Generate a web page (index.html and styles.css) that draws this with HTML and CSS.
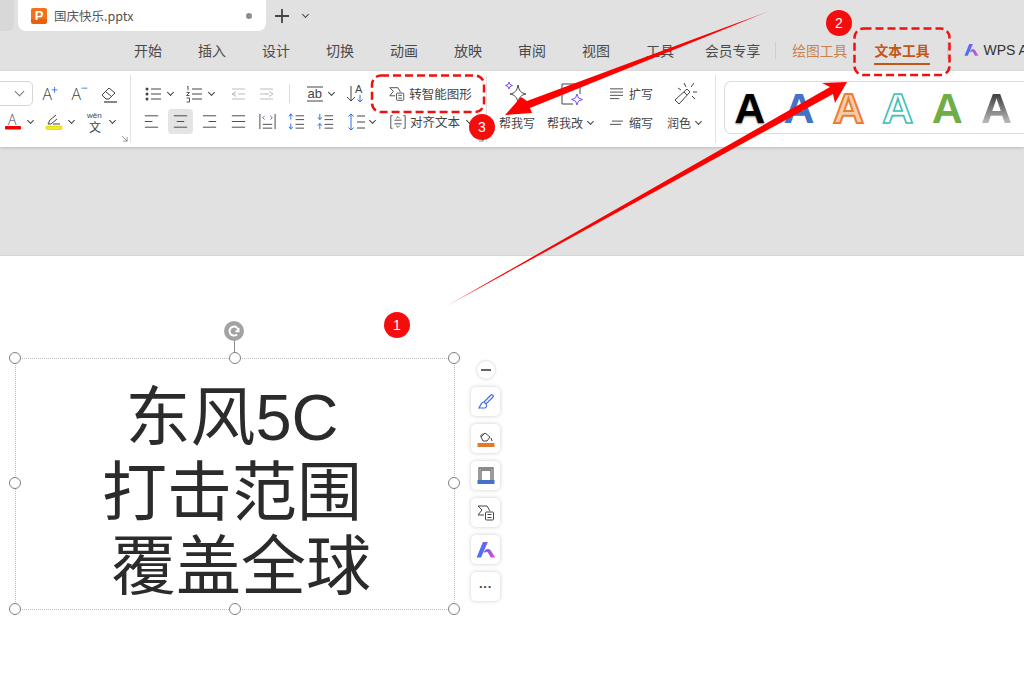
FILE: index.html
```html
<!DOCTYPE html>
<html lang="zh-CN">
<head>
  <meta charset="UTF-8" />
  <title>国庆快乐.pptx</title>
  <link rel="stylesheet" href="styles.css">
</head>
<body>
  <!-- title bar -->
  <div class="tabbar">
    <div class="tab-stub"></div>
    <div class="doc-tab">
      <span class="ppt-badge">P</span>
      <span class="doc-name">国庆快乐.pptx</span>
      <span class="doc-dot"></span>
    </div>
    <svg class="plus" viewBox="0 0 16 16"><path d="M8 1v14M1 8h14" /></svg>
    <span class="caret tab-caret"></span>
  </div>

  <!-- menu tabs -->
  <div class="menubar">
    <span class="menu-item">开始</span>
    <span class="menu-item">插入</span>
    <span class="menu-item">设计</span>
    <span class="menu-item">切换</span>
    <span class="menu-item">动画</span>
    <span class="menu-item">放映</span>
    <span class="menu-item">审阅</span>
    <span class="menu-item">视图</span>
    <span class="menu-item">工具</span>
    <span class="menu-item member">会员专享</span>
    <span class="menu-sep"></span>
    <span class="menu-item draw-tools">绘图工具</span>
    <span class="menu-item text-tools">文本工具</span>
    <span class="menu-sep sep-ai"></span>
    <svg class="wps-logo" viewBox="0 0 16 14">
      <defs>
        <linearGradient id="wpsGrad" x1="0" x2="1" y1="0" y2="0">
          <stop offset="0" stop-color="#2f7bff" />
          <stop offset="0.55" stop-color="#7a5cf5" />
          <stop offset="1" stop-color="#ff4fa0" />
        </linearGradient>
      </defs>
      <path fill="url(#wpsGrad)" d="M5.5 0.5h4L4 13H0.5zM7 7.5c2-1.800 4-1.500 5 0l3.500 5.500h-3.700L9.500 9c-.7-1-1.500-.8-2.300.3l-.9-.9z" />
    </svg>
    <span class="wps-label">WPS AI</span>
  </div>

  <!-- ribbon -->
  <div class="ribbon">
    <div class="group font-group">
      <div class="row">
        <div class="font-select"><span class="chevron"></span></div>
        <span class="tool ml5">
          <svg viewBox="0 0 24 20"><text x="3" y="17" class="glyph">A</text><path class="blue" d="M14 5h7M17.500 1.500v7" /></svg>
        </span>
        <span class="tool ml5">
          <svg viewBox="0 0 24 20"><text x="3" y="17" class="glyph">A</text><path class="blue" d="M15 3h7" /></svg>
        </span>
        <span class="tool ml6">
          <svg viewBox="0 0 20 20"><path d="M3 11l7-7 6 5-6 6H7z" /><path d="M6.500 7.500l6 5" /><path class="grey-thick" d="M5 18h13" /></svg>
        </span>
      </div>
      <div class="row font-row2">
        <span class="tool tool-color">
          <svg viewBox="0 0 18 20"><text x="4" y="13" class="glyph small">A</text><rect x="1" y="14" width="16" height="3.500" rx="1" fill="#f00000" stroke="none" /></svg>
          <span class="caret"></span>
        </span>
        <span class="tool tool-color ml10">
          <svg viewBox="0 0 18 20"><path d="M3 12l2-4 6-5M3 12l3 0 6-5M8 12h7" /><rect x="1" y="14" width="16" height="3.500" rx="1" fill="#f8e71c" stroke="#d8c000" stroke-width=".5" /></svg>
          <span class="caret"></span>
        </span>
        <span class="tool tool-color ml10">
          <svg class="wen-icon" viewBox="0 0 18 22"><text x="1" y="7" class="pinyin">wěn</text><text x="3" y="21" class="wen">文</text></svg>
          <span class="caret"></span>
        </span>
      </div>
      <svg class="launcher" viewBox="0 0 8 8"><path d="M1 1l6 6M7 2.500V7H2.500" /></svg>
    </div>

    <div class="group para-group">
      <div class="row para-top">
        <span class="tool tool-caret">
          <svg viewBox="0 0 20 20"><circle cx="3" cy="5" r="1.500" class="dot" /><circle cx="3" cy="10" r="1.500" class="dot" /><circle cx="3" cy="15" r="1.500" class="dot" /><path d="M7 5h10M7 10h10M7 15h10" /></svg>
          <span class="caret"></span>
        </span>
        <span class="tool tool-caret ml7">
          <svg viewBox="0 0 20 20"><path class="thick" d="M2 3l1-.8v4M1.500 8.500h3l-3 3h3M1.500 14h3v4h-3" /><path d="M7 5h10M7 10h10M7 15h10" /></svg>
          <span class="caret"></span>
        </span>
        <span class="tool off ml4">
          <svg viewBox="0 0 20 20"><path d="M4 5h13M10 10h7M4 15h13M8 7.500L4 10l4 2.500M4 10h4" /></svg>
        </span>
        <span class="tool off">
          <svg viewBox="0 0 20 20"><path d="M3 5h13M3 10h7M3 15h13M12 7.500l4 2.500-4 2.500M12 10h-4" /></svg>
        </span>
        <span class="para-sep"></span>
        <span class="tool tool-caret ml15">
          <svg viewBox="0 0 20 20"><path d="M2 3h16M2 17h16" /><text x="2.500" y="14" class="ab">ab</text></svg>
          <span class="caret"></span>
        </span>
        <span class="tool tool-sort ml2">
          <svg viewBox="0 0 20 20"><path d="M6 2v15M2 13l4 4 4-4" /><text x="10" y="9" class="ab small-a">A</text><path class="blue" d="M15 11v7M12.500 15.500l2.500 2.500 2.500-2.500" /></svg>
        </span>
        <span class="tool tool-text smart ml19">
          <svg viewBox="0 0 20 20"><path d="M2 3h9l3 5M2 3l4 4-4 5h6" /><rect x="9.500" y="9" width="8" height="8" rx="1" fill="#fff" /><path d="M11.500 11.500h4M11.500 14.500h4" /></svg>
          <span class="tool-label">转智能图形</span>
        </span>
      </div>
      <div class="row para-bottom">
        <span class="tool align"><svg viewBox="0 0 20 20"><path d="M3 4h14M3 10h8M3 16h14" /></svg></span>
        <span class="tool align active"><svg viewBox="0 0 20 20"><path d="M3 4h14M6 10h8M3 16h14" /></svg></span>
        <span class="tool align"><svg viewBox="0 0 20 20"><path d="M3 4h14M9 10h8M3 16h14" /></svg></span>
        <span class="tool align"><svg viewBox="0 0 20 20"><path d="M3 4h14M3 10h14M3 16h14" /></svg></span>
        <span class="tool align"><svg viewBox="0 0 20 20"><path d="M2 2v16M18 2v16M5 13h10M5 17h10" /><path class="blue" d="M7 4L5 6l2 2M13 4l2 2-2 2" /></svg></span>
        <span class="tool align"><svg viewBox="0 0 20 20"><path class="blue" d="M4 2v6M2 4.500L4 2l2 2.500M4 12v6M2 15.500L4 18l2-2.500" /><path d="M9 4h9M9 8h9M9 13h9M9 17h9" /></svg></span>
        <span class="tool align"><svg viewBox="0 0 20 20"><path class="blue" d="M4 2v6M2 5.500L4 8l2-2.500M4 12v6M2 14.500L4 12l2 2.500" /><path d="M9 4h9M9 8h9M9 13h9M9 17h9" /></svg></span>
        <span class="tool tool-space">
          <svg viewBox="0 0 20 20"><path class="blue" d="M5 2v16M2.500 4.500L5 2l2.500 2.500M2.500 15.500L5 18l2.500-2.500" /><path d="M11 4h8M11 10h8M11 16h8" /></svg>
          <span class="caret"></span>
        </span>
        <span class="tool tool-text align-text ml7">
          <svg viewBox="0 0 20 20"><path d="M4 3H2v14h2M16 3h2v14h-2M6 8h8M6 12h8M8 6l2-2 2 2M8 14l2 2 2-2" /></svg>
          <span class="tool-label">对齐文本</span>
          <span class="caret"></span>
        </span>
      </div>
      <svg class="launcher" viewBox="0 0 8 8"><path d="M1 1l6 6M7 2.500V7H2.500" /></svg>
    </div>

    <div class="group ai-group">
      <div class="ai-col write-col">
        <svg class="ai-icon" viewBox="0 0 28 28"><path d="M15 5c1 6 3 8 8 9-5 1-7 3-8 9-1-6-3-8-8-9 5-1 7-3 8-9z" /><path class="violet" d="M6 2l1 2.500L9.500 5.500 7 6.500 6 9 5 6.500 2.500 5.500 5 4.500z" /></svg>
        <span class="ai-label">帮我写</span>
      </div>
      <div class="ai-col edit-col">
        <svg class="ai-icon" viewBox="0 0 28 28"><path d="M16 24H5V4h18v10" /><path class="violet" d="M20 14l1.500 4 4 1.500-4 1.500-1.500 4-1.500-4-4-1.500 4-1.500z" /></svg>
        <span class="ai-label">帮我改<span class="caret"></span></span>
      </div>
      <div class="ai-col expand-col">
        <span class="ai-line">
          <svg viewBox="0 0 16 14"><path d="M1 2h14M1 5.500h14M1 9h14M1 12.500h10" /></svg>扩写
        </span>
        <span class="ai-line">
          <svg viewBox="0 0 16 14"><path d="M3 5.500h12M1 9h12" /></svg>缩写
        </span>
      </div>
      <div class="ai-col polish-col">
        <svg class="ai-icon" viewBox="0 0 28 28"><path d="M4 20L16 9l3 3L8 24z" /><path d="M13 12l3 3M13 3l2 4M23 3l-3 4M26 12h-4M24 19l-3-3M7 8l3 2" /></svg>
        <span class="ai-label">润色<span class="caret"></span></span>
      </div>
    </div>

    <div class="gallery">
      <span class="art art-black">A</span>
      <span class="art art-blue">A</span>
      <span class="art art-orange">A</span>
      <span class="art art-teal">A</span>
      <span class="art art-green">A</span>
      <span class="art art-grey">A</span>
    </div>
  </div>

  <div class="workspace"></div>

  <!-- slide with the selected text box -->
  <div class="slide">
    <div class="rotate-line"></div>
    <svg class="rotate-handle" viewBox="0 0 20 20"><circle cx="10" cy="10" r="10" fill="#a3a3a3" /><path d="M14.500 10a4.500 4.500 0 1 0-1.500 3.400M14.500 7v3.200h-3" fill="none" stroke="#fff" stroke-width="2" /></svg>
    <div class="textbox">
      <div class="textbox-text">东风5C
打击范围
 覆盖全球</div>
      <span class="handle h-tl"></span>
      <span class="handle h-tc"></span>
      <span class="handle h-tr"></span>
      <span class="handle h-ml"></span>
      <span class="handle h-mr"></span>
      <span class="handle h-bl"></span>
      <span class="handle h-bc"></span>
      <span class="handle h-br"></span>
    </div>

    <div class="float-bar">
      <span class="float-minus"></span>
      <span class="float-btn">
        <svg viewBox="0 0 20 20"><path class="float-blue" d="M8 10l7-7c1-1 3 1 2 2l-7 7zM8 10c-3 0-3 3-5 6h6c2-1 2-3 1-4" /></svg>
      </span>
      <span class="float-btn">
        <svg viewBox="0 0 20 20"><path d="M5 8l4-4 5 4-3 4H7zM5 8c-1-2 1-3 3-3M15 9l1 3" /><rect x="1.500" y="14" width="17" height="4" fill="#e07b2a" stroke="none" /></svg>
      </span>
      <span class="float-btn">
        <svg viewBox="0 0 20 20"><path d="M3 14V2h14v12M5 14V4h10v10" stroke="#666" stroke-width="1.300" /><rect x="1.500" y="14" width="17" height="4" fill="#4472c4" stroke="none" /></svg>
      </span>
      <span class="float-btn">
        <svg viewBox="0 0 20 20"><path d="M2 3h9l3 5M2 3l4 4-4 5h6" /><rect x="9.500" y="9" width="8" height="8" rx="1" fill="#fff" /><path d="M11.500 11.500h4M11.500 14.500h4" /></svg>
      </span>
      <span class="float-btn">
        <svg class="float-logo" viewBox="0 0 16 14"><path fill="url(#wpsGrad)" stroke="none" d="M5.500 0.500h4L4 13H0.500zM7 7.500c2-1.800 4-1.500 5 0l3.500 5.500h-3.700L9.500 9c-.7-1-1.500-.8-2.300.3l-.9-.9z" /></svg>
      </span>
      <span class="float-btn float-more">···</span>
    </div>
  </div>

  <!-- red annotations drawn over the screenshot -->
  <svg class="annotations" viewBox="0 0 1024 674">
    <defs>
      <linearGradient id="tailA" gradientUnits="userSpaceOnUse" x1="443" y1="308" x2="480" y2="287">
        <stop offset="0" stop-color="#ff0000" stop-opacity="0.4" />
        <stop offset="1" stop-color="#ff0000" />
      </linearGradient>
      <linearGradient id="tailB" gradientUnits="userSpaceOnUse" x1="772" y1="10" x2="735" y2="25">
        <stop offset="0" stop-color="#ff0000" stop-opacity="0.4" />
        <stop offset="1" stop-color="#ff0000" />
      </linearGradient>
    </defs>
    <rect class="dash" x="372" y="75.500" width="112" height="36.500" rx="9" />
    <rect class="dash" x="854.500" y="28.500" width="95" height="46.500" rx="9" />
    <polygon fill="url(#tailA)" points="443,308 830,87 822,83 847,82 835,103 833,94" />
    <polygon fill="url(#tailB)" points="772,10 527,101 521,97 505,115 532,113 530,108" />
    <circle class="pin" cx="397" cy="325" r="13" />
    <circle class="pin" cx="839" cy="23" r="13" />
    <circle class="pin" cx="482" cy="127" r="13" />
    <text class="pin-num" x="397" y="330">1</text>
    <text class="pin-num" x="839" y="28">2</text>
    <text class="pin-num" x="482" y="132">3</text>
  </svg>
</body>
</html>
```

FILE: styles.css
```css
* {
  box-sizing: border-box;
}

html,
body {
  margin: 0;
  height: 100%;
}

body {
  width: 1024px;
  height: 674px;
  overflow: hidden;
  position: relative;
  background-color: #e1e1e1;
  color: #444;
  font-family: "Noto Sans CJK SC", "Liberation Sans", sans-serif;
  font-size: 12px;
  display: flex;
  flex-direction: column;
}

svg {
  display: block;
  fill: none;
  stroke: #444;
  stroke-width: 1;
}

/* Title bar */
.tabbar {
  height: 31px;
  display: flex;
  align-items: center;
  flex-shrink: 0;
}

.tab-stub {
  width: 14px;
  height: 31px;
  background-color: #d8d8d8;
  border-bottom-right-radius: 6px;
}

.doc-tab {
  width: 248px;
  height: 31px;
  margin-left: 4px;
  padding-left: 13px;
  background-color: #fff;
  border-bottom-left-radius: 8px;
  border-bottom-right-radius: 8px;
  display: flex;
  align-items: center;
}

.ppt-badge {
  width: 16px;
  height: 16px;
  border-radius: 2px;
  background: linear-gradient(#f4701a 70%, #e85f10 70%);
  color: #fff;
  font: bold 13px/16px "Liberation Sans", sans-serif;
  text-align: center;
}

.doc-name {
  margin-left: 7px;
  color: #555;
  font-size: 12.500px;
  line-height: 16px;
}

.doc-dot {
  width: 6px;
  height: 6px;
  margin-left: auto;
  margin-right: 14px;
  border-radius: 50%;
  background-color: #8c8c8c;
}

.plus {
  width: 16px;
  height: 16px;
  margin-left: 8px;
  stroke: #444;
  stroke-width: 1.800;
}

.caret {
  display: inline-block;
  width: 5px;
  height: 5px;
  border-right: 1.300px solid #444;
  border-bottom: 1.300px solid #444;
  transform: rotate(45deg);
  margin-top: -3px;
  flex-shrink: 0;
}

.tab-caret {
  margin-left: 13px;
}

/* Menu tabs */
.menubar {
  height: 40px;
  padding: 0 0 2px 134px;
  flex-shrink: 0;
  display: flex;
  align-items: center;
  white-space: nowrap;
  overflow: hidden;
}

.menu-item {
  margin-right: 36px;
  font-size: 14px;
  line-height: 20px;
  color: #4a4a4a;
}

.menu-item.member {
  margin-left: -5px;
  margin-right: 15px;
  font-size: 13.800px;
}

.menu-sep {
  width: 1px;
  height: 17px;
  background-color: #cfcfcf;
  margin-right: 16px;
  flex-shrink: 0;
}

.menu-item.draw-tools {
  margin-right: 27px;
  color: #c9824e;
  font-size: 13.800px;
}

.menu-item.text-tools {
  margin-right: 17px;
  color: #c4561a;
  font-weight: 700;
  font-size: 13.800px;
  border-bottom: 2px solid #c4561a;
  height: 25px;
  margin-top: 5px;
}

.sep-ai {
  margin-right: 16px;
}

.wps-logo {
  width: 15px;
  height: 14px;
  stroke: none;
  flex-shrink: 0;
}

.wps-label {
  margin-left: 5px;
  font: 14px "Liberation Sans", sans-serif;
  color: #333;
}

/* Ribbon */
.ribbon {
  height: 76px;
  flex-shrink: 0;
  background-color: #fff;
  box-shadow: 0 1px 3px rgba(0, 0, 0, 0.18);
  display: flex;
  position: relative;
  z-index: 1;
}

.group {
  position: relative;
  height: 68px;
  margin-top: 4px;
  padding-top: 4px;
  border-right: 1px solid #e2e2e2;
  flex-shrink: 0;
}

.row {
  height: 29px;
  display: flex;
  align-items: center;
  white-space: nowrap;
}

.row + .row {
  margin-top: -1px;
}

.font-group {
  width: 131px;
}

.font-select {
  width: 43px;
  height: 25px;
  margin-left: -10px;
  border: 1px solid #d6d6d6;
  border-radius: 5px;
  display: flex;
  align-items: center;
  justify-content: flex-end;
  padding-right: 9px;
}

.chevron {
  width: 7px;
  height: 7px;
  border-right: 1px solid #777;
  border-bottom: 1px solid #777;
  transform: rotate(45deg);
  margin-top: -4px;
}

.tool {
  width: 24px;
  height: 24px;
  display: flex;
  align-items: center;
  justify-content: center;
  flex-shrink: 0;
  border-radius: 4px;
}

.tool svg {
  width: 20px;
  height: 20px;
  flex-shrink: 0;
}

.ml2 { margin-left: 2px; }
.ml4 { margin-left: 4px; }
.ml5 { margin-left: 5px; }
.ml6 { margin-left: 6px; }
.ml7 { margin-left: 7px; }
.ml10 { margin-left: 10px; }
.ml15 { margin-left: 15px; }
.ml19 { margin-left: 19px; }

.font-row2 {
  padding-left: 4px;
}

.tool-color {
  width: 31px;
  justify-content: flex-start;
  gap: 6px;
}

.tool-color svg {
  width: 18px;
  overflow: visible;
}

.tool-color svg.wen-icon {
  height: 22px;
}

.glyph {
  font: 300 19px "Open Sans", sans-serif;
  fill: #444;
  stroke: none;
}

.glyph.small {
  font-size: 14px;
}

.pinyin {
  font: 8px "Liberation Sans", sans-serif;
  fill: #444;
  stroke: none;
}

.wen {
  font: 12px "Noto Sans CJK SC", sans-serif;
  fill: #444;
  stroke: none;
}

.ab {
  font: 13px "Liberation Sans", sans-serif;
  fill: #444;
  stroke: none;
}

.small-a {
  font-size: 11px;
}

.blue {
  stroke: #2f6fdf;
}

.violet {
  stroke: #7a4df0;
}

.thick {
  stroke-width: 0.900;
}

.grey-thick {
  stroke: #888;
  stroke-width: 2;
}

.dot {
  fill: #444;
  stroke: none;
}

.off {
  width: 29px;
}

.off svg {
  stroke: #bdbdbd;
}

.launcher {
  position: absolute;
  right: 2px;
  bottom: 1px;
  width: 7px;
  height: 7px;
  stroke: #888;
}

.para-group {
  width: 356px;
}

.para-top {
  padding-left: 13px;
}

.tool-caret {
  width: 34px;
  justify-content: flex-start;
  padding-left: 0;
  gap: 4px;
}

.para-sep {
  width: 1px;
  height: 19px;
  margin-left: 8px;
  background-color: #dcdcdc;
}

.tool-sort {
  width: 28px;
}

.tool-text {
  width: auto;
  gap: 3px;
}

.tool-text svg {
  width: 18px;
  height: 18px;
}

.smart {
  width: 84px;
}

.tool-label {
  white-space: nowrap;
  font-size: 12.500px;
}

.para-bottom {
  padding-left: 6px;
}

.align {
  width: 29px;
  height: 25px;
}

.align svg {
  width: 19px;
  height: 19px;
}

.align.active {
  background-color: #e4e4e4;
  width: 25px;
  margin: 0 2px;
}

.tool-space {
  width: 36px;
  justify-content: flex-start;
  gap: 4px;
  margin-left: 6px;
}

.align-text {
  gap: 3px;
}

.align-text .caret {
  margin-left: 4px;
}

.ai-group {
  width: 229px;
  display: flex;
  padding-left: 12px;
}

.ai-col {
  display: flex;
  flex-direction: column;
  align-items: center;
  flex-shrink: 0;
}

.ai-icon {
  width: 28px;
  height: 28px;
  margin-top: 1px;
}

.ai-label {
  height: 29px;
  display: flex;
  align-items: center;
  gap: 5px;
  white-space: nowrap;
  color: #444;
}

.write-col {
  width: 36px;
}

.edit-col {
  width: 50px;
  margin-left: 12px;
  align-items: flex-start;
}

.edit-col .ai-icon {
  margin-left: 10px;
}

.expand-col {
  width: 44px;
  margin-left: 12px;
}

.polish-col {
  width: 36px;
  margin-left: 14px;
  align-items: flex-start;
}

.polish-col .ai-icon {
  margin-left: 4px;
}

.ai-line {
  height: 29px;
  display: flex;
  align-items: center;
  gap: 5px;
  white-space: nowrap;
}

.ai-line svg {
  width: 15px;
  height: 13px;
}

.gallery {
  width: 300px;
  height: 53px;
  margin: 10px 0 0 8px;
  border: 1px solid #dcdcdc;
  border-right: none;
  border-radius: 7px 0 0 7px;
  display: flex;
  align-items: center;
  overflow: hidden;
  flex-shrink: 0;
}

.art {
  width: 49.400px;
  flex-shrink: 0;
  text-align: center;
  font: bold 43px/50px "Liberation Sans", sans-serif;
}

.art-black {
  color: #000;
  text-shadow: 0 1px 2px rgba(0, 0, 0, 0.5);
}

.art-blue {
  color: #4472c4;
}

.art-orange {
  color: #f8cbad;
  -webkit-text-stroke: 2px #ed7d31;
}

.art-teal {
  color: #fff;
  -webkit-text-stroke: 1.600px #3cbfb5;
}

.art-green {
  color: #70ad47;
}

.art-grey {
  color: transparent;
  background: linear-gradient(#444 25%, #c4c4c4 85%);
  -webkit-background-clip: text;
  background-clip: text;
}

.workspace {
  height: 109px;
  flex-shrink: 0;
  border-bottom: 1px solid #d6d6d6;
}

/* Slide */
.slide {
  flex: 1;
  background-color: #fff;
  position: relative;
}

.textbox {
  position: absolute;
  left: 15px;
  top: 102px;
  width: 440px;
  height: 252px;
  padding: 18px 6px 0 0;
  border: 1px dotted #bdbdbd;
  display: flex;
  align-items: center;
  justify-content: center;
}

.textbox-text {
  white-space: pre;
  text-align: center;
  color: #2b2b2b;
  font-family: "Liberation Sans", "Noto Sans CJK SC", sans-serif;
  font-size: 65px;
  line-height: 74.500px;
}

.handle {
  position: absolute;
  width: 12px;
  height: 12px;
  border: 1.300px solid #808080;
  border-radius: 50%;
  background-color: #fff;
  margin: -6px 0 0 -6px;
}

.h-tl { left: -1px; top: -1px; }
.h-tc { left: 50%; top: -1px; }
.h-tr { left: 100%; top: -1px; }
.h-ml { left: -1px; top: calc(50% - 1px); }
.h-mr { left: 100%; top: calc(50% - 1px); }
.h-bl { left: -1px; top: 100%; }
.h-bc { left: 50%; top: 100%; }
.h-br { left: 100%; top: 100%; }

.rotate-line {
  position: absolute;
  left: 234px;
  top: 82px;
  width: 1px;
  height: 20px;
  background-color: #8a8a8a;
}

.rotate-handle {
  position: absolute;
  left: 224px;
  top: 65px;
  width: 20px;
  height: 20px;
  stroke: none;
}

.float-bar {
  position: absolute;
  left: 471px;
  top: 105px;
  width: 29px;
  display: flex;
  flex-direction: column;
  align-items: center;
  gap: 8px;
}

.float-minus {
  width: 18px;
  height: 18px;
  border-radius: 50%;
  background-color: #fff;
  box-shadow: 0 0 3px rgba(0, 0, 0, 0.25);
  display: flex;
  align-items: center;
  justify-content: center;
}

.float-minus::before {
  content: "";
  width: 10px;
  height: 1.500px;
  background-color: #666;
}

.float-btn {
  width: 29px;
  height: 29px;
  border-radius: 5px;
  background-color: #fff;
  box-shadow: 0 0 4px rgba(0, 0, 0, 0.2);
  display: flex;
  align-items: center;
  justify-content: center;
}

.float-btn svg {
  width: 20px;
  height: 20px;
}

.float-blue {
  stroke: #3c6fe0;
  stroke-width: 1.200;
}

.float-logo {
  stroke: none;
}

.float-more {
  font: bold 13px "Liberation Sans", sans-serif;
  color: #444;
}

/* Annotations */
.annotations {
  position: absolute;
  left: 0;
  top: 0;
  width: 1024px;
  height: 674px;
  stroke: none;
  z-index: 2;
}

.dash {
  fill: none;
  stroke: #f01010;
  stroke-width: 2.500;
  stroke-dasharray: 8 4;
}

.pin {
  fill: #f50c0c;
  stroke: none;
}

.pin-num {
  fill: #fff;
  stroke: none;
  font: 14px "Liberation Sans", sans-serif;
  text-anchor: middle;
}
```
